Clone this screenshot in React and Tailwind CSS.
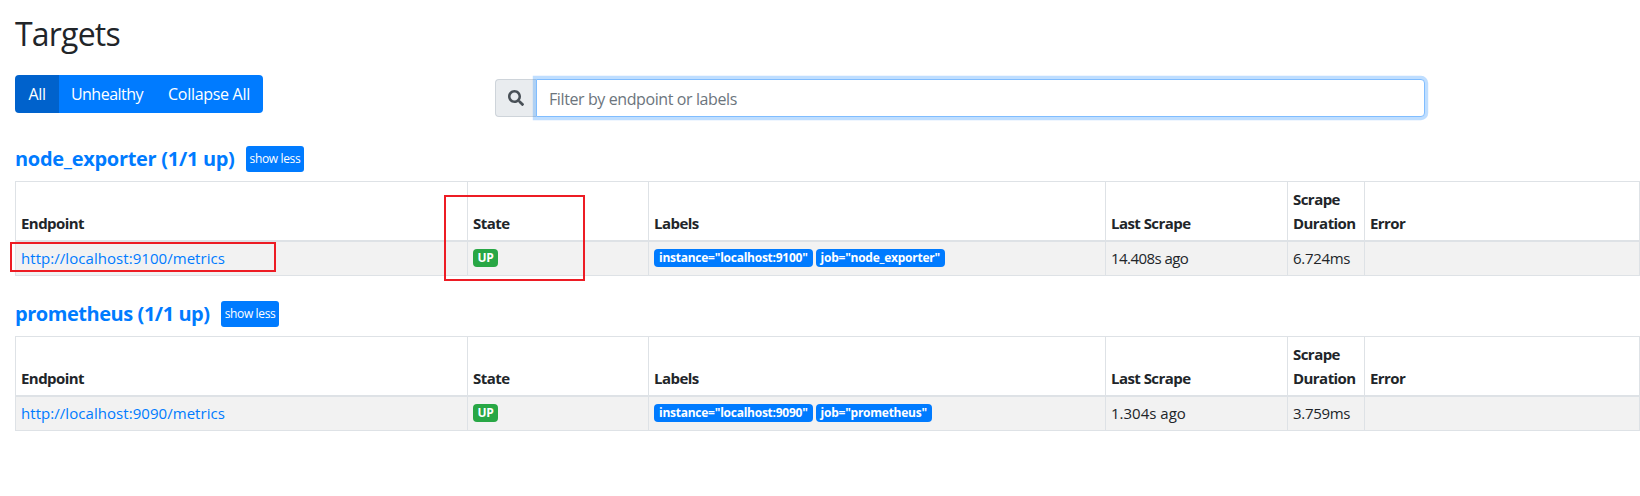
import React from "react";
import { FaSearch } from "react-icons/fa";

const font = { fontFamily: '"Open Sans", "Noto Sans", sans-serif' };
const th = "border border-b-2 border-[#dee2e6] px-[5px] pb-[5px] text-left font-bold leading-[24px] tracking-[-0.55px]";

function Pool({ name, marginClass, nameClass, endpoint, labels, last, lastClass, dur }) {
  return (
    <section className={marginClass}>
      <div className="flex items-center h-[26px]">
        <a className={"text-[20px] leading-[26px] font-bold text-[#007bff] " + nameClass}>{name} (1/1 up)</a>
        <button className="ml-[11px] h-[26px] px-[4px] rounded-[3px] bg-[#007bff] text-white text-[12px] leading-[26px] tracking-[-0.35px]">show less</button>
      </div>
      <table className="mt-[9px] w-[1625px] table-fixed border-collapse text-[#212529] text-[15px] tracking-[-0.3px]">
        <colgroup>
          <col className="w-[452px]" />
          <col className="w-[181px]" />
          <col className="w-[457px]" />
          <col className="w-[182px]" />
          <col className="w-[77px]" />
          <col />
        </colgroup>
        <thead>
          <tr className="h-[59px] border-b-2 border-[#dee2e6] align-bottom">
            <th className={th}>Endpoint</th>
            <th className={th}>State</th>
            <th className={th}>Labels</th>
            <th className={th}>Last Scrape</th>
            <th className={th}>Scrape Duration</th>
            <th className={th}>Error</th>
          </tr>
        </thead>
        <tbody>
          <tr className="h-[35px] bg-[#f2f2f2]">
            <td className="border border-[#dee2e6] px-[5px]"><a className="text-[#007bff] tracking-[0.05px]">{endpoint}</a></td>
            <td className="border border-[#dee2e6] px-[5px]">
              <span className="flex w-[25px] h-[18px] items-center justify-center rounded-[4px] bg-[#28a745] text-white text-[12px] font-bold">UP</span>
            </td>
            <td className="border border-[#dee2e6] px-[5px]">
              <div className="flex gap-[3px]">
                {labels.map((l) => (
                  <span key={l} className="flex h-[18px] items-center px-[5px] rounded-[4px] bg-[#007bff] text-white text-[12px] font-bold tracking-[-0.25px] whitespace-nowrap">{l}</span>
                ))}
              </div>
            </td>
            <td className="border border-[#dee2e6] px-[5px]"><span className={lastClass}>{last}</span></td>
            <td className="border border-[#dee2e6] px-[5px]">{dur}</td>
            <td className="border border-[#dee2e6] px-[5px]"></td>
          </tr>
        </tbody>
      </table>
    </section>
  );
}

export default function App() {
  return (
    <div className="relative w-[1640px] h-[496px] overflow-hidden bg-white pl-[15px] pt-[15px]" style={font}>
      <h1 className="text-[32px] leading-[38px] font-medium text-[#212529] tracking-[-0.8px]">Targets</h1>
      <div className="mt-[22px] flex items-start">
        <div className="flex h-[38px] w-[248px] rounded-[4px] overflow-hidden text-white text-[16px] leading-[38px] tracking-[-0.35px]">
          <button className="w-[44px] bg-[#0062cc]">All</button>
          <button className="w-[96px] bg-[#007bff] tracking-[-0.5px]">Unhealthy</button>
          <button className="flex-1 bg-[#007bff] tracking-[-0.3px]">Collapse All</button>
        </div>
        <div className="ml-[232px] mt-[4px] flex h-[38px] w-[930px]">
          <div className="flex w-[41px] items-center justify-center rounded-l-[4px] border border-r-0 border-[#ced4da] bg-[#e9ecef] text-[#495057]">
            <FaSearch size={16} />
          </div>
          <div className="flex flex-1 items-center rounded-r-[4px] border border-[#80bdff] bg-white pl-[12px] pt-[2px] shadow-[0_0_0_3.2px_rgba(0,123,255,0.25)] text-[16px] text-[#6c757d] tracking-[-0.4px]">
            Filter by endpoint or labels
          </div>
        </div>
      </div>
      <Pool marginClass="mt-[29px]" nameClass="tracking-[-0.3px]" name="node_exporter" endpoint="http://localhost:9100/metrics" labels={['instance="localhost:9100"', 'job="node_exporter"']} last="14.408s ago" lastClass="tracking-[-0.55px]" dur="6.724ms" />
      <Pool marginClass="mt-[25px]" nameClass="tracking-[-0.45px]" name="prometheus" endpoint="http://localhost:9090/metrics" labels={['instance="localhost:9090"', 'job="prometheus"']} last="1.304s ago" lastClass="tracking-[0px]" dur="3.759ms" />
      <div className="absolute left-[10px] top-[242px] w-[266px] h-[30px] border-2 border-[#ed1c24]"></div>
      <div className="absolute left-[444px] top-[195px] w-[141px] h-[86px] border-2 border-[#ed1c24]"></div>
    </div>
  );
}
